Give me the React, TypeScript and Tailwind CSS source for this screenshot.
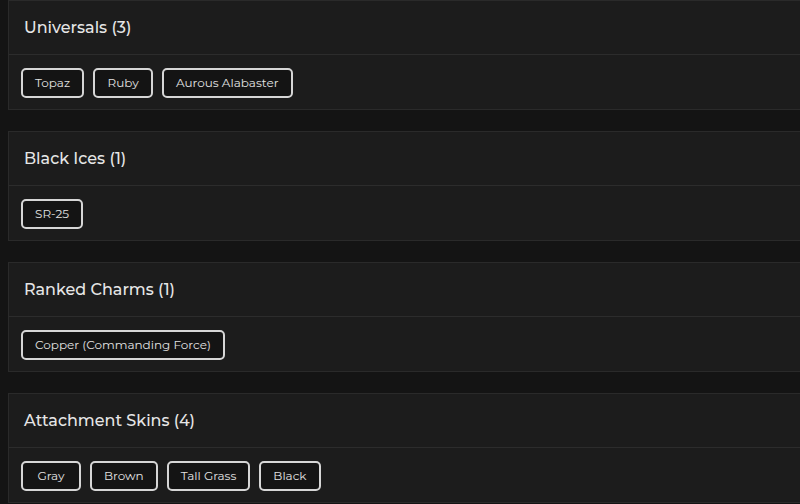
import React from "react";

const groups = [
  { title: "Universals (3)", items: ["Topaz", "Ruby", "Aurous Alabaster"] },
  { title: "Black Ices (1)", items: ["SR-25"] },
  { title: "Ranked Charms (1)", items: ["Copper (Commanding Force)"] },
  { title: "Attachment Skins (4)", items: ["Gray", "Brown", "Tall Grass", "Black"] },
];

export default function App() {
  return (
    <div
      className="w-[800px] h-[504px] overflow-hidden bg-[#141414]"
      style={{ fontFamily: "Montserrat, 'Open Sans', 'Noto Sans', sans-serif" }}
    >
      <div className="flex flex-col gap-[21px] pl-2 w-[840px]">
        {groups.map((g) => (
          <div key={g.title} className="border border-[#2a2a2a] bg-[#1c1c1c]">
            <div className="h-[54px] flex items-center pl-[15px] border-b border-[#2c2c2c] text-[16px] font-medium text-[#e6e6e6]">
              {g.title}
            </div>
            <div className="flex gap-[9px] px-3 pt-[13px] pb-[11px]">
              {g.items.map((it) => (
                <div
                  key={it}
                  className="h-[30px] min-w-[60px] px-[12px] flex items-center justify-center border-2 border-[#d6d6d6] rounded-[5px] bg-[#141414] text-[12px] text-[#e2e2e2]"
                >
                  {it}
                </div>
              ))}
            </div>
          </div>
        ))}
      </div>
    </div>
  );
}
